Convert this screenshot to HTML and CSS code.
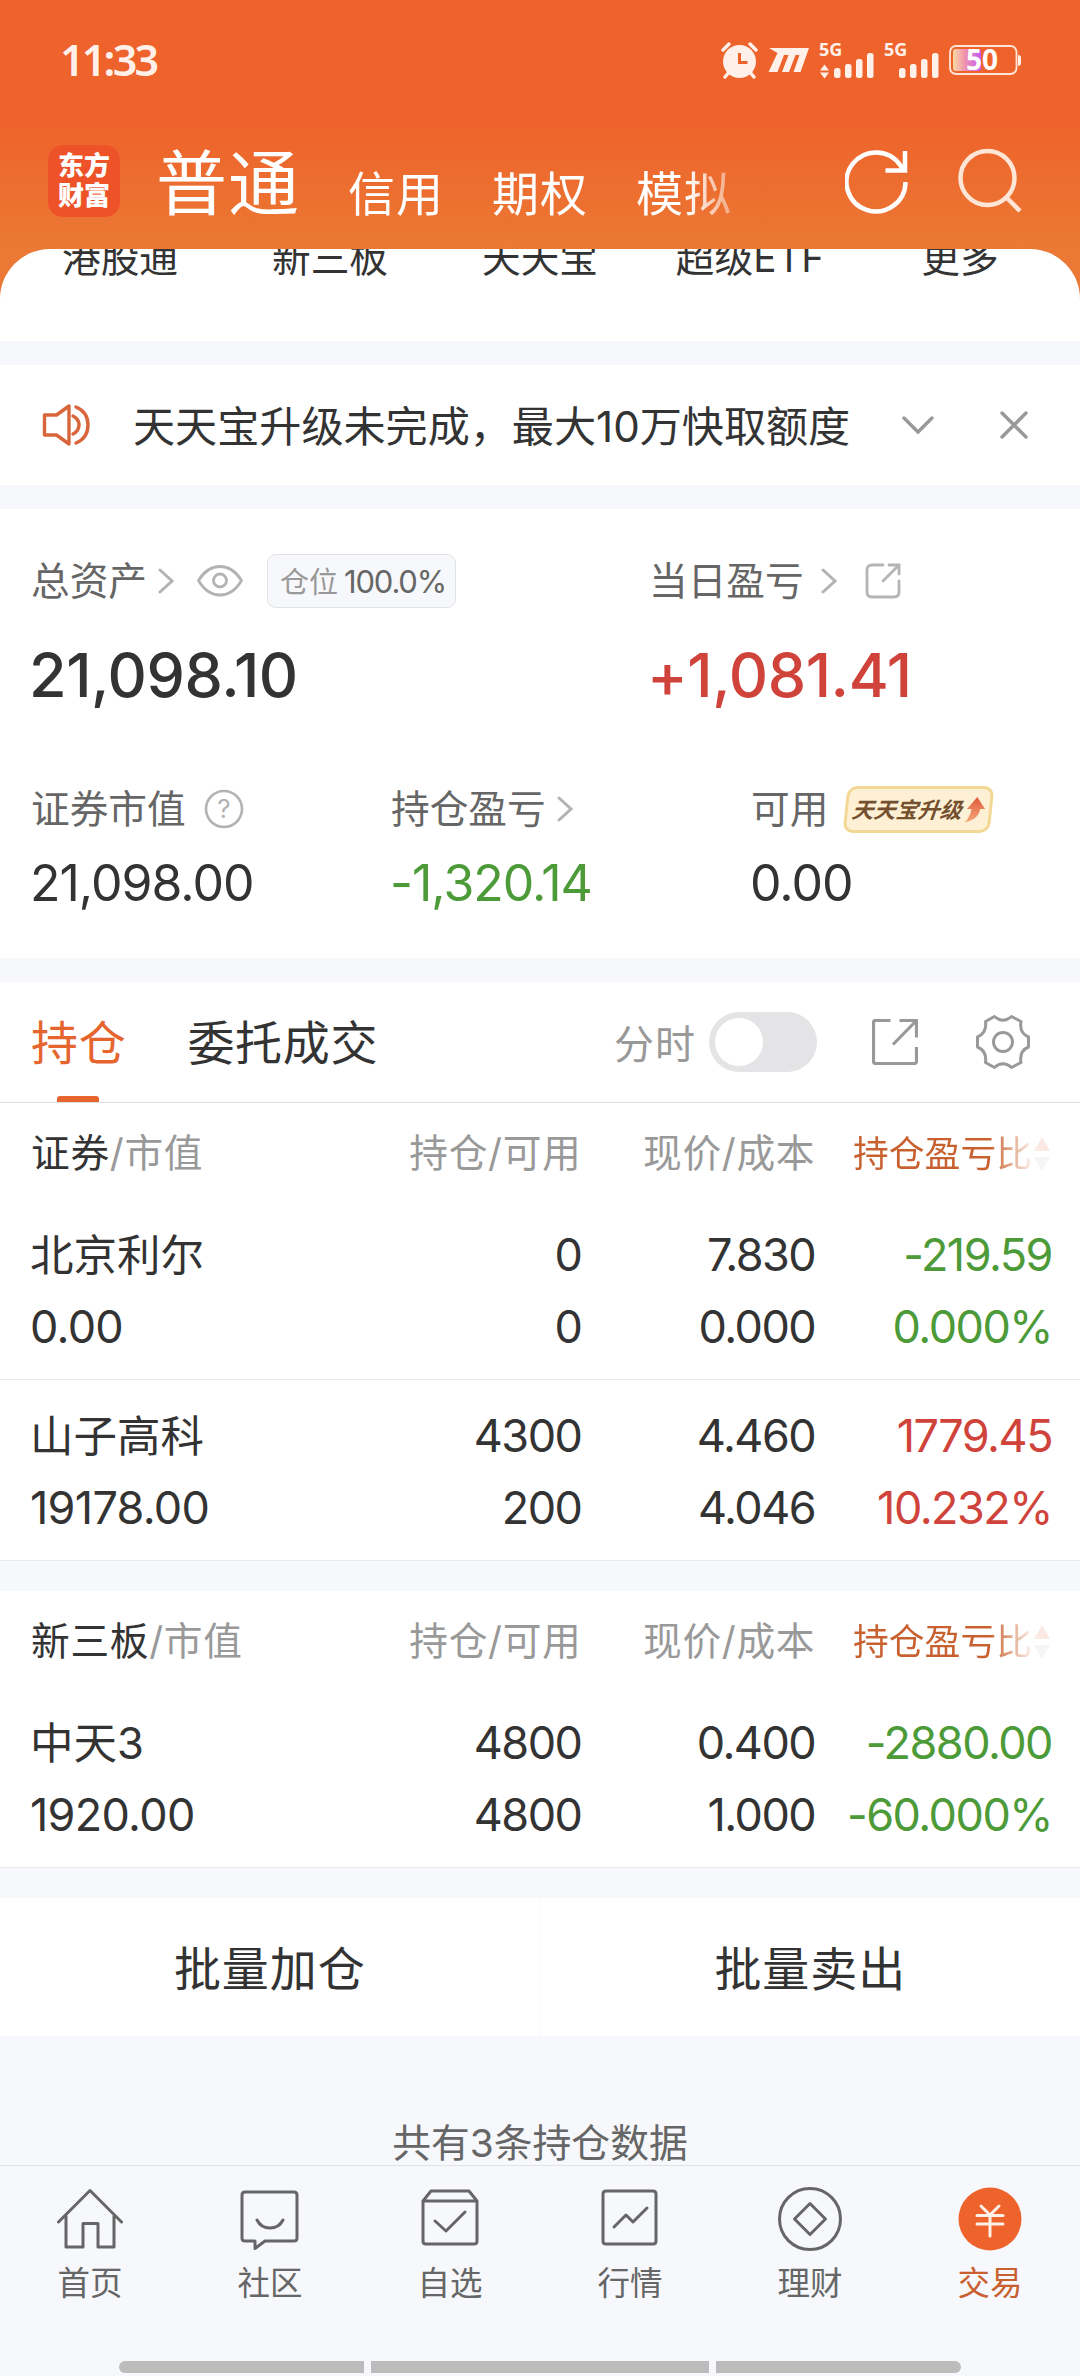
FILE: index.html
```html
<!DOCTYPE html>
<html lang="zh-CN">
<head>
<meta charset="UTF-8">
<meta name="viewport" content="width=device-width, initial-scale=1.0">
<title>普通交易 - 持仓</title>
<link rel="stylesheet" href="styles.css">
</head>
<body>
<div class="page">

    <!-- 顶部 -->
    <div class="top">
        <div class="status">
            <span class="time">11:33</span>
            <svg class="status-icons" width="310" height="50" viewBox="0 0 310 50">
                <defs>
                    <linearGradient id="bat" x1="0" x2="1" y1="0" y2="0">
                        <stop offset="0" stop-color="#fbd9a0"/>
                        <stop offset="0.45" stop-color="#ee8fb0"/>
                        <stop offset="1" stop-color="#c65cf5"/>
                    </linearGradient>
                </defs>
                <g fill="#fff1ea">
                    <circle cx="28.500" cy="26.500" r="16.500"/>
                    <path d="M12 15l6-6M45 15l-6-6M14 42l5-6M43 42l-5-6" stroke="#fff1ea" stroke-width="3.500" stroke-linecap="round"/>
                    <path d="M28.500 18v9.500h8" fill="none" stroke="#ee632b" stroke-width="3"/>
                    <path d="M58 13h40l-8.500 24h-7l6-17h-4l-6.500 17h-7l6.500-17h-4.500l-6.500 17h-9l9-19z"/>
                    <text x="108" y="20.500" class="net">5G</text>
                    <path d="M109 35.500l4.500-6 4.500 6zM109 37.500l4.500 6 4.500-6z"/>
                    <rect x="123" y="33" width="6.500" height="10" rx="2.500"/>
                    <rect x="134" y="29" width="6.500" height="14" rx="2.500"/>
                    <rect x="145" y="24" width="6.500" height="19" rx="2.500"/>
                    <rect x="156" y="18" width="6.500" height="25" rx="2.500"/>
                    <text x="173" y="20.500" class="net">5G</text>
                    <rect x="188" y="33" width="6.500" height="10" rx="2.500"/>
                    <rect x="199" y="29" width="6.500" height="14" rx="2.500"/>
                    <rect x="210" y="24" width="6.500" height="19" rx="2.500"/>
                    <rect x="221" y="18" width="6.500" height="25" rx="2.500"/>
                    <path d="M307 20q3 0 3 3v5q0 3-3 3z"/>
                </g>
                <rect x="239" y="11" width="66.500" height="28" rx="6" fill="none" stroke="#ffe4d6" stroke-width="1.800"/>
                <rect x="242" y="14" width="28" height="22" rx="3" fill="url(#bat)"/>
                <text x="255" y="35" class="bat">50</text>
            </svg>
        </div>

        <div class="titlebar">
            <div class="logo"><span>东方</span><span>财富</span></div>
            <div class="accounts">
                <span class="account on">普通</span>
                <span class="account">信用</span>
                <span class="account">期权</span>
                <span class="account">模拟</span>
            </div>
            <svg class="refresh" width="64" height="66" viewBox="0 0 64 66" fill="none" stroke="#fff" stroke-width="4.500">
                <path d="M60.500 34A29.500 29.500 0 1 1 55.500 17.500L59 22"/>
                <path d="M60 3v19.500H40.500"/>
            </svg>
            <svg class="search" width="64" height="66" viewBox="0 0 64 66" fill="none" stroke="#ffe5d6" stroke-width="4.500">
                <circle cx="29.500" cy="30" r="27"/>
                <path d="M48 49l14 14"/>
            </svg>
        </div>

        <div class="sheet">
            <span>港股通</span>
            <span>新三板</span>
            <span>天天宝</span>
            <span>超级ETF</span>
            <span>更多</span>
        </div>
    </div>

    <!-- 公告 -->
    <div class="notice">
        <svg width="48" height="44" viewBox="0 0 48 44" fill="none" stroke="#d9663a" stroke-width="3.400" stroke-linejoin="round" stroke-linecap="round">
            <path d="M2.500 12h12L27 3v38l-12.500-9h-12z"/>
            <path d="M31 13q6 3 6 9t-6 9M34 4q12 5 12 18t-12 18"/>
        </svg>
        <p>天天宝升级未完成，最大10万快取额度</p>
        <svg class="down" width="32" height="20" viewBox="0 0 32 20" fill="none" stroke="#999" stroke-width="3.400" stroke-linecap="round"><path d="M2 3l14 14L30 3"/></svg>
        <svg width="30" height="30" viewBox="0 0 30 30" fill="none" stroke="#999" stroke-width="3.400" stroke-linecap="round"><path d="M3 3l24 24M27 3L3 27"/></svg>
    </div>

    <!-- 资产 -->
    <div class="assets">
        <div class="main-assets">
            <div class="asset">
                <div class="label">
                    <span>总资产</span>
                    <svg class="arrow" width="16" height="26" viewBox="0 0 16 26"><path d="M2 2l12 11L2 24"/></svg>
                    <svg class="eye" width="46" height="32" viewBox="0 0 46 32" fill="none" stroke="#b3b3b3" stroke-width="2.800">
                        <path d="M1.500 15.500Q10 1.500 23 1.500T44.500 15.500Q36 30 23 30T1.500 15.500z" stroke-linejoin="round"/>
                        <circle cx="23" cy="15.500" r="6.500"/>
                    </svg>
                    <span class="tag">仓位<b>100.0%</b></span>
                </div>
                <div class="total">21,098.10</div>
            </div>
            <div class="asset">
                <div class="label">
                    <span>当日盈亏</span>
                    <svg class="arrow today" width="16" height="26" viewBox="0 0 16 26"><path d="M2 2l12 11L2 24"/></svg>
                    <svg class="share-s" width="36" height="36" viewBox="0 0 36 36" fill="none" stroke="#b5b5b5" stroke-width="2.800" stroke-linecap="round">
                        <path d="M18 2H7Q2 2 2 7v22q0 5 5 5h22q5 0 5-5V18M24 2h10v9M34 2L18 18"/>
                    </svg>
                </div>
                <div class="total red">+1,081.41</div>
            </div>
        </div>
        <div class="sub-assets">
            <div class="asset">
                <div class="label">
                    <span>证券市值</span>
                    <svg class="help" width="40" height="40" viewBox="0 0 40 40">
                        <circle cx="20" cy="20" r="18" fill="none" stroke="#b3b3b3" stroke-width="2.600"/>
                        <text x="20" y="29" text-anchor="middle">?</text>
                    </svg>
                </div>
                <div class="value">21,098.00</div>
            </div>
            <div class="asset">
                <div class="label">
                    <span>持仓盈亏</span>
                    <svg class="arrow" width="16" height="26" viewBox="0 0 16 26"><path d="M2 2l12 11L2 24"/></svg>
                </div>
                <div class="value green">-1,320.14</div>
            </div>
            <div class="asset">
                <div class="label">
                    <span>可用</span>
                    <span class="upgrade">
                        <em>天天宝升级</em>
                        <svg width="20" height="26" viewBox="0 0 20 26">
                            <defs><linearGradient id="up" x1="0" x2="0" y1="0" y2="1"><stop offset="0" stop-color="#e05a3c"/><stop offset="1" stop-color="#f5a878"/></linearGradient></defs>
                            <path d="M11 0l9 12h-5q0 10-14 13.500Q6 20 6.500 12H2z" fill="url(#up)"/>
                        </svg>
                    </span>
                </div>
                <div class="value">0.00</div>
            </div>
        </div>
    </div>

    <!-- 持仓 -->
    <div class="tabs">
        <span class="tab on">持仓</span>
        <span class="tab">委托成交</span>
        <span class="minute">分时</span>
        <span class="switch"></span>
        <svg class="share" width="46" height="46" viewBox="0 0 46 46" fill="none" stroke="#999" stroke-width="3.200">
            <path d="M18.500 1.500H3.500q-2 0-2 2v39q0 2 2 2h39q2 0 2-2V28M27.500 1.500h17v17M44 2L21 25.500"/>
        </svg>
        <svg class="gear" width="54" height="54" viewBox="0 0 54 54" fill="none" stroke="#999" stroke-width="3" stroke-linejoin="round">
            <path d="M18.500 1.500Q27 9 35.500 1.500L45 6.500Q43 18 52.500 22v10Q43 36 45 47.500l-9.500 5Q27 45 18.500 52.500L9.500 47.500Q11 36 1.500 32V22Q11 18 9.500 6.500z"/>
            <circle cx="27" cy="27" r="9.500"/>
        </svg>
    </div>

    <div class="holdings">
        <div class="thead">
            <span class="c1"><b>证券</b>/市值</span>
            <span class="c2">持仓/可用</span>
            <span class="c3">现价/成本</span>
            <span class="c4"><i>持仓盈亏比</i><svg width="16" height="36" viewBox="0 0 16 36"><path d="M0 15L8 1l8 14z" fill="#fbeae3"/><path d="M0 21l8 14 8-14z" fill="#f5f5f6"/></svg></span>
        </div>
        <div class="row">
            <div class="c1"><p class="name">北京利尔</p><p>0.00</p></div>
            <div class="c2"><p>0</p><p>0</p></div>
            <div class="c3"><p>7.830</p><p>0.000</p></div>
            <div class="c4 green"><p>-219.59</p><p>0.000%</p></div>
        </div>
        <div class="row">
            <div class="c1"><p class="name">山子高科</p><p>19178.00</p></div>
            <div class="c2"><p>4300</p><p>200</p></div>
            <div class="c3"><p>4.460</p><p>4.046</p></div>
            <div class="c4 red"><p>1779.45</p><p>10.232%</p></div>
        </div>
    </div>

    <div class="holdings">
        <div class="thead">
            <span class="c1"><b>新三板</b>/市值</span>
            <span class="c2">持仓/可用</span>
            <span class="c3">现价/成本</span>
            <span class="c4"><i>持仓盈亏比</i><svg width="16" height="36" viewBox="0 0 16 36"><path d="M0 15L8 1l8 14z" fill="#fbeae3"/><path d="M0 21l8 14 8-14z" fill="#f5f5f6"/></svg></span>
        </div>
        <div class="row">
            <div class="c1"><p class="name">中天3</p><p>1920.00</p></div>
            <div class="c2"><p>4800</p><p>4800</p></div>
            <div class="c3"><p>0.400</p><p>1.000</p></div>
            <div class="c4 green"><p>-2880.00</p><p>-60.000%</p></div>
        </div>
    </div>

    <div class="batch">
        <span>批量加仓</span>
        <span>批量卖出</span>
    </div>

    <div class="count">共有3条持仓数据</div>

    <!-- 底部导航 -->
    <div class="nav">
        <div class="nav-item">
            <svg width="66" height="66" viewBox="0 0 66 66">
                <path d="M1.500 36L33 4.500 64.500 36M9 30v31h17V37.500h15V61h16V30"/>
            </svg>
            <span>首页</span>
        </div>
        <div class="nav-item">
            <svg width="66" height="66" viewBox="0 0 66 66">
                <path d="M8 6h49q3 0 3 3v43q0 3-3 3H28l-10 7.500V55H8q-3 0-3-3V9q0-3 3-3zM20 34q4 8 13 8t13-8"/>
            </svg>
            <span>社区</span>
        </div>
        <div class="nav-item">
            <svg width="66" height="66" viewBox="0 0 66 66">
                <path d="M6 15l8-10h38l8 10v40q0 3-3 3H9q-3 0-3-3zM6 15h54M18 35l11 10 19-19"/>
            </svg>
            <span>自选</span>
        </div>
        <div class="nav-item">
            <svg width="66" height="66" viewBox="0 0 66 66">
                <path d="M9 5h47q3 0 3 3v47q0 3-3 3H9q-3 0-3-3V8q0-3 3-3zM17 41l12-12 7 7 14-14"/>
            </svg>
            <span>行情</span>
        </div>
        <div class="nav-item">
            <svg width="66" height="66" viewBox="0 0 66 66">
                <circle cx="33" cy="33" r="30.500"/>
                <path d="M33 17.500L48.500 33 33 48.500 17.500 33z"/>
            </svg>
            <span>理财</span>
        </div>
        <div class="nav-item on">
            <svg width="66" height="66" viewBox="0 0 66 66">
                <circle cx="33" cy="33" r="31.500"/>
                <path d="M24 20l9 9 9-9M20 29.500h26M20 38h26M33 29v21"/>
            </svg>
            <span>交易</span>
        </div>
    </div>

    <div class="gesture"><i></i><i></i><i></i></div>
</div>
</body>
</html>
```
FILE: styles.css
```css
* {
    margin: 0;
    padding: 0;
    box-sizing: border-box;
}

body {
    width: 1080px;
    background: #f7f8fb;
    font-family: Inter, "Noto Sans CJK SC", sans-serif;
    color: #333;
}

b, i {
    font-weight: inherit;
    font-style: normal;
}

svg {
    display: block;
    flex: none;
}

.page {
    display: flex;
    flex-direction: column;
    height: 2376px;
    overflow: hidden;
}

.red { color: #d0433b; }
.green { color: #4c9a38; }

/* 顶部 */
.top {
    height: 341px;
    background: linear-gradient(#ee632b 125px, #eb7834 245px);
}

.status {
    display: flex;
    justify-content: space-between;
    align-items: center;
    height: 109px;
    padding: 11px 59px 0 60px;
}

.time {
    font-family: "Noto Sans", sans-serif;
    font-size: 43px;
    font-weight: 600;
    line-height: 50px;
    letter-spacing: -2.8px;
    color: #fff1ea;
}

.net {
    font: 700 18px "Noto Sans", sans-serif;
}

.bat {
    font: 700 28px "Noto Sans", sans-serif;
    fill: #fff;
}

.titlebar {
    display: flex;
    align-items: center;
    height: 140px;
    padding: 4px 58px 0 48px;
}

.logo {
    display: flex;
    flex-direction: column;
    align-items: center;
    justify-content: center;
    width: 72px;
    height: 72px;
    border-radius: 15px;
    background: #ee5228;
    color: #fff;
    font-size: 26px;
    font-weight: 900;
    line-height: 30px;
}

.accounts {
    display: flex;
    align-items: center;
    flex: 1;
    margin-left: 36px;
    color: #fff;
    -webkit-mask-image: linear-gradient(90deg, #000 530px, rgba(0, 0, 0, .4) 575px);
    mask-image: linear-gradient(90deg, #000 530px, rgba(0, 0, 0, .4) 575px);
}

.account {
    margin-right: 48px;
    padding-top: 25px;
    font-size: 47px;
    line-height: 60px;
    letter-spacing: 1px;
}

.account.on {
    padding-top: 3px;
    font-size: 71px;
    line-height: 80px;
}

.search {
    margin-left: 49px;
}

.sheet {
    display: flex;
    height: 92px;
    padding: 0 15px;
    border-radius: 50px 50px 0 0;
    background: #fff;
    overflow: hidden;
}

.sheet span {
    width: 210px;
    margin-top: -21px;
    text-align: center;
    font-size: 38.7px;
    line-height: 60px;
}

/* 公告 */
.notice {
    display: flex;
    align-items: center;
    height: 120px;
    margin: 24px 0;
    padding: 0 51px 0 42px;
    background: #fff;
}

.notice p {
    flex: 1;
    margin-left: 43px;
    padding-top: 3px;
    font-size: 42.1px;
    line-height: 60px;
    white-space: nowrap;
}

.notice .down {
    margin-right: 65px;
}

/* 资产 */
.assets {
    height: 449px;
    padding: 45px 31px 0;
    background: #fff;
}

.main-assets,
.sub-assets {
    display: flex;
}

.main-assets .asset {
    width: 618px;
}

.sub-assets {
    margin-top: 65px;
}

.sub-assets .asset {
    width: 360px;
}

.asset:last-child {
    width: auto;
}

.label {
    display: flex;
    align-items: center;
    height: 54px;
    font-size: 38.7px;
    line-height: 54px;
    color: #666;
    white-space: nowrap;
}

.arrow {
    margin-left: 11px;
    fill: none;
    stroke: #b3b3b3;
    stroke-width: 3;
    stroke-linecap: round;
}

.arrow.today {
    margin-left: 17px;
}

.eye {
    margin: 0 24px 0 23px;
}

.tag {
    height: 54px;
    width: 189px;
    padding-left: 12px;
    border: 1px solid #e3e3e5;
    border-radius: 9px;
    background: #f7f8fb;
    color: #999;
    font-size: 29px;
    line-height: 53px;
}

.tag b {
    margin-left: 6px;
    color: #666;
    font-size: 31px;
    letter-spacing: -1.2px;
}

.share-s {
    margin-left: 28px;
}

.total {
    margin-top: 25px;
    margin-left: -2px;
    font-size: 61px;
    font-weight: 500;
    line-height: 84px;
    letter-spacing: -.4px;
}

.help {
    margin-left: 18px;
}

.help text {
    font: 26px Inter, sans-serif;
    fill: #b3b3b3;
}

.value {
    margin-top: 10px;
    margin-left: -1px;
    font-size: 50px;
    line-height: 74px;
    letter-spacing: -1px;
}

.upgrade {
    display: flex;
    align-items: center;
    justify-content: center;
    gap: 3px;
    width: 147px;
    height: 47px;
    margin-left: 17px;
    border: 3px solid #f2d894;
    border-radius: 10px;
    background: #fdf0d5;
    transform: skewX(-6deg);
}

.upgrade em {
    color: #75502e;
    font-size: 22px;
    font-weight: 700;
    line-height: 40px;
}

/* 持仓 */
.tabs {
    display: flex;
    align-items: center;
    height: 121px;
    margin-top: 24px;
    padding: 0 50px 0 31px;
    border-bottom: 1px solid #dedede;
    background: #fff;
}

.tab {
    position: relative;
    margin-right: 61px;
    padding-top: 2px;
    font-size: 47px;
    line-height: 118px;
    letter-spacing: .7px;
}

.tab.on {
    color: #e6652f;
}

.tab.on::after {
    content: "";
    position: absolute;
    left: 26px;
    bottom: 0;
    width: 42px;
    height: 6px;
    border-radius: 3px 3px 0 0;
    background: #e6652f;
}

.minute {
    margin-left: auto;
    font-size: 40px;
    letter-spacing: 1px;
    color: #999;
}

.switch {
    width: 108px;
    height: 60px;
    margin-left: 13px;
    padding: 6px;
    border-radius: 30px;
    background: #e4e4e6;
}

.switch::before {
    content: "";
    display: block;
    width: 48px;
    height: 48px;
    border-radius: 50%;
    background: #fff;
}

.share {
    margin: 0 58px 0 55px;
}

.holdings {
    margin-bottom: 30px;
    background: #fff;
}

.thead {
    display: flex;
    height: 96px;
    padding: 20px 30px 0 31px;
    font-size: 38.7px;
    line-height: 60px;
    letter-spacing: .7px;
    color: #999;
}

.thead b {
    color: #333;
}

.row {
    display: flex;
    height: 181px;
    padding: 20px 30px 0 30px;
    border-bottom: 1px solid #ebebed;
    font-size: 45px;
    line-height: 72px;
    letter-spacing: -1.5px;
}

.c1 { width: 250px; }
.c2 { width: 301px; text-align: right; }
.c3 { width: 234px; text-align: right; }
.c4 { width: 235px; text-align: right; }

.row .c1 {
    width: 251px;
    letter-spacing: -.7px;
}

.row .c4 {
    width: 237px;
    margin-right: -2px;
}

.row .name {
    font-size: 43.5px;
    letter-spacing: 0;
}

.thead .c4 {
    display: flex;
    justify-content: flex-end;
    align-items: center;
    gap: 2px;
    height: 62px;
    font-size: 35.8px;
    letter-spacing: 0;
}

.thead i {
    background: linear-gradient(90deg, #c8602f 76%, #fbeee7);
    -webkit-background-clip: text;
    background-clip: text;
    color: transparent;
}

.batch {
    display: flex;
    height: 138px;
    background: #fff;
}

.batch span {
    flex: 1;
    text-align: center;
    font-size: 47px;
    line-height: 142px;
    letter-spacing: .9px;
}

.batch span:first-child {
    border-right: 1px solid #f7f8fb;
}

.count {
    height: 129px;
    padding-top: 77px;
    text-align: center;
    font-size: 38.8px;
    line-height: 60px;
    color: #666;
}

/* 底部导航 */
.nav {
    display: flex;
    height: 196px;
    padding-top: 20px;
    border-top: 1px solid #e2e3e6;
}

.nav-item {
    display: flex;
    flex-direction: column;
    align-items: center;
    width: 180px;
    font-size: 32.5px;
    line-height: 63px;
    color: #666;
}

.nav-item svg {
    fill: none;
    stroke: #666;
    stroke-width: 3;
    stroke-linejoin: round;
    stroke-linecap: round;
}

.nav-item.on {
    color: #c8602f;
}

.nav-item.on svg {
    stroke: #fff1ea;
}

.nav-item.on circle {
    fill: #ee632b;
    stroke: none;
}

.gesture {
    display: flex;
    justify-content: center;
    gap: 7px;
}

.gesture i {
    width: 245px;
    height: 12px;
    background: #bcbcbc;
}

.gesture i:nth-child(2) { width: 338px; }
.gesture i:first-child { border-radius: 6px 0 0 6px; }
.gesture i:last-child { border-radius: 0 6px 6px 0; }
```
